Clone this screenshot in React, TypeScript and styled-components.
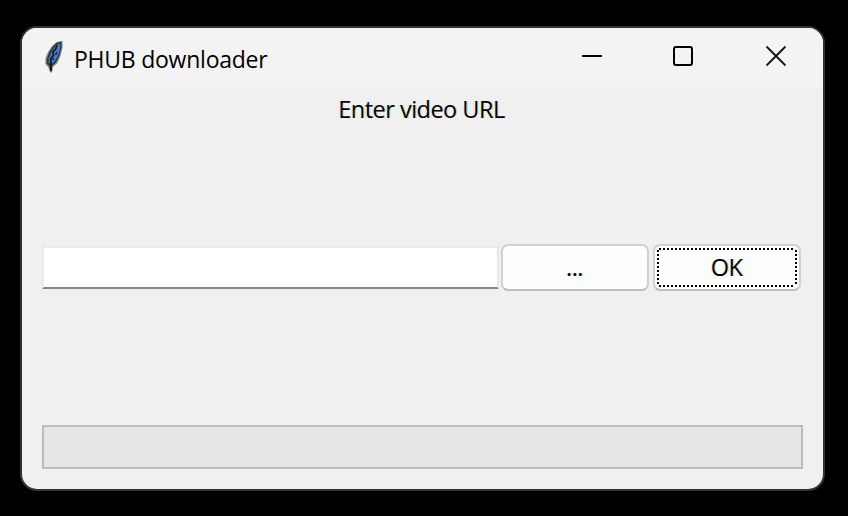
import React from "react";
import styled, { createGlobalStyle } from "styled-components";

const GlobalStyle = createGlobalStyle`
  *, *::before, *::after { box-sizing: border-box; }
  html, body { margin: 0; background: #000; overflow: hidden; }
  body { font-family: "Open Sans", "Noto Sans", sans-serif; color: #000; }
`;

const Desktop = styled.main`
  width: 848px;
  height: 516px;
  padding: 26px 23px 25px 20px;
  background: #000;
`;

const Window = styled.section`
  height: 465px;
  display: flex;
  flex-direction: column;
  border: 2px solid #333;
  border-radius: 17px;
  background: #f0f0f0;
  overflow: hidden;
`;

const TitleBar = styled.header`
  height: 60px;
  flex: none;
  display: flex;
  align-items: flex-start;
  background: #f3f3f3;
`;

const AppIcon = styled.svg`
  width: 22px;
  height: 34px;
  margin: 12px 0 0 21px;
`;

const Title = styled.h1`
  flex: 1;
  margin: 14px 0 0 9px;
  font-size: 23px;
  line-height: 34px;
  font-weight: 400;
  letter-spacing: -0.24px;
  white-space: nowrap;
`;

const Controls = styled.div`
  display: flex;
  gap: 70px;
  margin: 17px 36px 0 0;
`;

const ControlButton = styled.button`
  width: 22px;
  height: 22px;
  padding: 0;
  border: 0;
  background: none;
  svg { display: block; }
`;

const Content = styled.div`
  flex: 1;
  display: flex;
  flex-direction: column;
  padding: 0 20px 20px;
`;

const Label = styled.label`
  height: 42px;
  padding-right: 2px;
  text-align: center;
  font-size: 23.5px;
  line-height: 42px;
  letter-spacing: -0.52px;
  text-shadow: -1px 0 rgba(255, 236, 130, 0.6), 1px 0 rgba(120, 205, 255, 0.5);
`;

const FormRow = styled.div`
  display: flex;
  align-items: flex-start;
  margin-top: 114px;
  height: 47px;
`;

const UrlInput = styled.input`
  flex: none;
  width: 457px;
  height: 43px;
  margin: 2px 2px 0 0;
  padding: 0 8px;
  border: 2px solid #e8e8e8;
  border-bottom-color: #858585;
  border-left-color: #ececec;
  border-top-color: #ebebeb;
  border-radius: 0;
  background: #fff;
  font: 23px "Open Sans", sans-serif;
  outline: 0;
`;

const Button = styled.button`
  display: flex;
  flex: none;
  width: 148px;
  height: 47px;
  margin-right: 4px;
  padding: 2px;
  border: 2px solid #d0d0d0;
  border-bottom-color: #bdbdbd;
  border-radius: 7px;
  background: #fdfdfd;
  color: #000;
  font: 23.5px/39px "Open Sans", "Noto Sans", sans-serif;
  &:last-child { margin-right: 0; }
`;

const dots = "repeating-linear-gradient(90deg, #000 0 2px, transparent 2px 4px)";
const dotsDown = "repeating-linear-gradient(180deg, #000 0 2px, transparent 2px 4px)";

const ButtonFace = styled.span<{ $focused?: boolean }>`
  flex: 1;
  height: 39px;
  padding-right: 1px;
  text-align: center;
  letter-spacing: -0.5px;
  text-shadow: -1px 0 rgba(255, 236, 130, 0.7), 1px 0 rgba(120, 205, 255, 0.6);
  ${({ $focused }) =>
    $focused &&
    `background:
      ${dots} 2px 0 / 136px 2px no-repeat,
      ${dots} 2px 100% / 136px 2px no-repeat,
      ${dotsDown} 0 2px / 2px 35px no-repeat,
      ${dotsDown} 100% 2px / 2px 35px no-repeat;`}
`;

const Progress = styled.div`
  height: 44px;
  margin-top: auto;
  border: 2px solid #bcbcbc;
  background: #e6e6e6;
`;

function Feather() {
  return (
    <AppIcon viewBox="0 0 22 34" aria-hidden="true">
      <path d="M19.5 1 L13.5 2 L9 6 L5 12 L2.5 18 L2.3 24 L5 27 L7.3 32.5 L8.8 32.5 L10 27 L14.5 23 L17.5 16 L19.5 8Z" fill="#858a8e" />
      <path d="M18.5 1.5 L13.5 3 L9.5 7 L6 13 L3.8 19 L3.7 23.5 L6.3 26 L7.7 32 L9 26 L13 22.5 L16.5 15 L18.5 7Z" fill="#30353b" />
      <path d="M16.8 3.5 L13 5 L9 11 L5.6 18.5 L5.7 22.5 L8 24.5 L12 21 L15.5 14 L17.2 7Z" fill="#4384cd" />
      <path d="M14 5 L12.7 9 L10 12 L10.5 15 L7.7 19 L8.2 31" fill="none" stroke="#111820" strokeWidth="1.8" />
      <path d="M14 12 L12.5 15 M11 18 L9.5 20" stroke="#192536" strokeWidth="1.5" />
    </AppIcon>
  );
}

export default function App() {
  return (
    <>
      <GlobalStyle />
      <Desktop>
        <Window>
          <TitleBar>
            <Feather />
            <Title>PHUB downloader</Title>
            <Controls>
              <ControlButton aria-label="Minimize">
                <svg width="22" height="22"><path d="M1 11H21" stroke="#000" strokeWidth="2" /></svg>
              </ControlButton>
              <ControlButton aria-label="Maximize">
                <svg width="22" height="22"><rect x="1" y="2" width="18" height="18" rx="2" fill="none" stroke="#000" strokeWidth="2" /></svg>
              </ControlButton>
              <ControlButton aria-label="Close">
                <svg width="22" height="22"><path d="M1.5 1.5L20.5 20.5M20.5 1.5L1.5 20.5" stroke="#111" strokeWidth="1.8" /></svg>
              </ControlButton>
            </Controls>
          </TitleBar>
          <Content>
            <Label htmlFor="url">Enter video URL</Label>
            <FormRow>
              <UrlInput id="url" />
              <Button><ButtonFace>...</ButtonFace></Button>
              <Button><ButtonFace $focused>OK</ButtonFace></Button>
            </FormRow>
            <Progress role="progressbar" />
          </Content>
        </Window>
      </Desktop>
    </>
  );
}
